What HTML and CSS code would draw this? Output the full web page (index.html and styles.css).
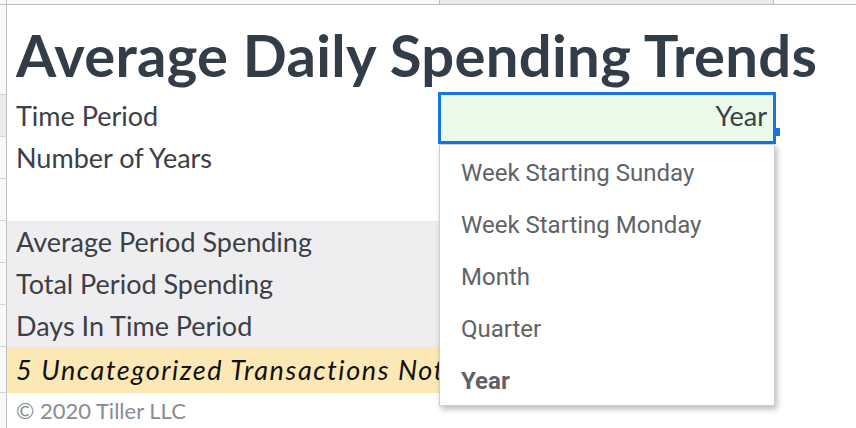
FILE: index.html
```html
<!DOCTYPE html>
<html>
<head>
<meta charset="utf-8">
<link rel="stylesheet" href="styles.css">
</head>
<body>
<div class="sheet">
  <div class="corner"></div>
  <div class="colhdr"></div>
  <div class="colhdr sel"></div>
  <div class="colhdr"></div>

  <div class="rh"></div>
  <div class="cell title-cell"><h1 class="title">Average Daily Spending Trends</h1></div>

  <div class="rh sel"></div>
  <div class="cell label">Time Period</div>
  <div class="cell active"><span>Year</span></div>
  <div class="cell"></div>

  <div class="rh"></div>
  <div class="cell label">Number of Years</div>
  <div class="cell"></div>
  <div class="cell"></div>

  <div class="rh"></div>
  <div class="cell"></div>
  <div class="cell"></div>
  <div class="cell"></div>

  <div class="rh"></div>
  <div class="cell label grey wide">Average Period Spending</div>
  <div class="cell"></div>

  <div class="rh"></div>
  <div class="cell label grey wide">Total Period Spending</div>
  <div class="cell"></div>

  <div class="rh"></div>
  <div class="cell label grey wide">Days In Time Period</div>
  <div class="cell"></div>

  <div class="rh"></div>
  <div class="cell warn wide"><span class="warn-text">5 Uncategorized Transactions Not Included</span></div>
  <div class="cell"></div>

  <div class="rh last"></div>
  <div class="cell copy">© 2020 Tiller LLC</div>
  <div class="cell"></div>
  <div class="cell"></div>
</div>

<ul class="dropdown">
  <li>Week Starting Sunday</li>
  <li>Week Starting Monday</li>
  <li>Month</li>
  <li>Quarter</li>
  <li class="chosen">Year</li>
</ul>
</body>
</html>
```

FILE: styles.css
```css
html, body {
  margin: 0;
  padding: 0;
  background: #ffffff;
  overflow: hidden;
}

body {
  width: 856px;
  height: 428px;
  position: relative;
  font-family: "Lato", "Open Sans", sans-serif;
}

.sheet {
  display: grid;
  grid-template-columns: 7px 432px 335px 1fr;
  grid-template-rows: 5px 90px 42px 42px 42px 42px 42px 42px 46px 35px;
  overflow: hidden;
  height: 428px;
}

.corner {
  background: #f8f9fa;
  border-right: 1px solid #c0c0c0;
  border-bottom: 1px solid #c0c0c0;
  box-sizing: border-box;
}

.colhdr {
  background: #f8f9fa;
  border-bottom: 1px solid #c0c0c0;
  box-sizing: border-box;
}

.colhdr.sel {
  background: #e8eaed;
  border-left: 1px solid #c0c0c0;
  border-right: 1px solid #c0c0c0;
}

.rh {
  background: #f8f9fa;
  border-right: 1px solid #c0c0c0;
  border-bottom: 1px solid #d4d4d4;
  box-sizing: border-box;
}

.rh.sel {
  background: #e8eaed;
}

.rh.last {
  border-bottom: none;
}

.cell {
  min-width: 0;
}

.title-cell {
  grid-column: span 3;
  white-space: nowrap;
}

.title {
  margin: 0;
  padding: 17px 0 0 9px;
  font-family: "Lato", sans-serif;
  font-weight: 700;
  font-size: 58px;
  line-height: 66px;
  color: #333d47;
  letter-spacing: 0.3px;
}

.label {
  padding-left: 9px;
  font-size: 27px;
  line-height: 42px;
  color: #3b4046;
  white-space: nowrap;
}

.wide {
  grid-column: span 2;
}

.grey {
  background: #eeeef0;
}

.warn {
  background: #fce8b4;
  padding-left: 9px;
}

.warn-text {
  display: block;
  width: 423px;
  overflow: hidden;
  font-style: italic;
  font-size: 27px;
  letter-spacing: 1.6px;
  line-height: 46px;
  color: #111111;
  white-space: nowrap;
}

.copy {
  padding-left: 9px;
  font-size: 22px;
  line-height: 36px;
  color: #868d96;
  white-space: nowrap;
}

.active {
  position: relative;
  z-index: 1;
  background: #eafbea;
  text-align: right;
  padding-right: 7px;
  font-size: 27px;
  line-height: 42px;
  color: #3b4046;
}

.active::before {
  content: "";
  position: absolute;
  left: -1px;
  top: -3px;
  right: -2px;
  bottom: -7px;
  border: 3px solid #1a73e8;
  background: #eafbea;
  z-index: -1;
}

.active::after {
  content: "";
  position: absolute;
  right: -6px;
  top: 33px;
  width: 5px;
  height: 8px;
  background: #1a73e8;
}

.dropdown {
  position: absolute;
  left: 439px;
  top: 144px;
  width: 336px;
  height: 262px;
  box-sizing: border-box;
  margin: 0;
  padding: 2px 0 0 0;
  list-style: none;
  background: #ffffff;
  border: 1px solid #cfcfcf;
  box-shadow: 2px 3px 6px rgba(0, 0, 0, 0.28);
  font-family: "Roboto", sans-serif;
  font-size: 24px;
  color: #5f6368;
  z-index: 5;
}

.dropdown li {
  height: 52px;
  line-height: 52px;
  padding-left: 21px;
}

.dropdown li.chosen {
  font-weight: 700;
}
```
